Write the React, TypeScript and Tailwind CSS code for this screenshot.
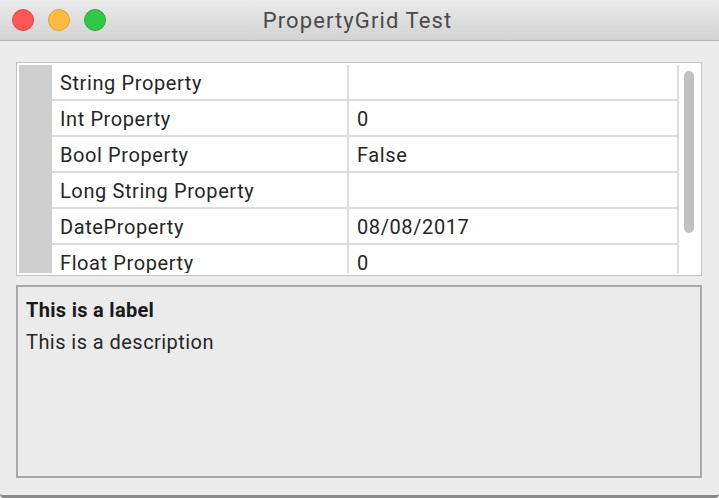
const rows: [string, string][] = [
  ["String Property", ""],
  ["Int Property", "0"],
  ["Bool Property", "False"],
  ["Long String Property", ""],
  ["DateProperty", "08/08/2017"],
  ["Float Property", "0"],
];

export default function App() {
  return (
    <div
      className="w-[719px] h-[498px] bg-[#ececec] flex flex-col overflow-hidden border-b-[3px] border-[#8a8a8a] rounded-b-[4px]"
      style={{ fontFamily: "Roboto, 'Noto Sans', sans-serif" }}
    >
      {/* Title bar */}
      <div className="relative h-[41px] shrink-0 bg-gradient-to-b from-[#ebebeb] to-[#d2d2d2] border-b border-[#b4b4b4] flex items-center justify-center">
        <div className="absolute left-[12px] top-[9px] flex gap-[14px]">
          <span className="w-[22px] h-[22px] rounded-full bg-[#fc5753] border border-[#df4744]" />
          <span className="w-[22px] h-[22px] rounded-full bg-[#fdbc40] border border-[#dea236]" />
          <span className="w-[22px] h-[22px] rounded-full bg-[#33c748] border border-[#27aa35]" />
        </div>
        <span className="text-[22px] tracking-[1.1px] text-[#4a4a4a] leading-none pt-[2px] pr-[4px]">PropertyGrid Test</span>
      </div>

      <div className="flex-1 flex flex-col px-[16px] pt-[21px] pb-[17px] gap-[9px]">
        {/* Property grid */}
        <div className="h-[214px] w-[686px] shrink-0 bg-white border border-[#c2c2c2] p-[2px] flex overflow-hidden">
          <div className="w-[33px] shrink-0 bg-[#cfcfcf]" />
          <div className="flex-1 flex flex-col border-r-2 border-[#dcdcdc] overflow-hidden">
            {rows.map(([name, value]) => (
              <div key={name} className="h-[36px] shrink-0 flex border-b-2 border-[#dcdcdc]">
                <div className="w-[297px] shrink-0 border-r-2 border-[#dcdcdc] pl-[8px] pt-[2px] flex items-center text-[20px] tracking-[0.6px] text-[#262626]">
                  {name}
                </div>
                <div className="flex-1 pl-[8px] pt-[2px] flex items-center text-[20px] tracking-[0.6px] text-[#262626]">{value}</div>
              </div>
            ))}
          </div>
          <div className="w-[20px] shrink-0 pt-[6px] flex justify-center">
            <div className="w-[10px] h-[162px] rounded-full bg-[#c1c1c1]" />
          </div>
        </div>

        {/* Description panel */}
        <div className="flex-1 w-[686px] border-2 border-[#a9a9a9] bg-[#ebebeb] px-[8px] pt-[11px]">
          <div className="text-[20px] font-bold tracking-[0.3px] text-[#1a1a1a] leading-[24px]">This is a label</div>
          <div className="text-[20px] tracking-[0.45px] text-[#262626] leading-[24px] mt-[8px]">This is a description</div>
        </div>
      </div>
    </div>
  );
}
